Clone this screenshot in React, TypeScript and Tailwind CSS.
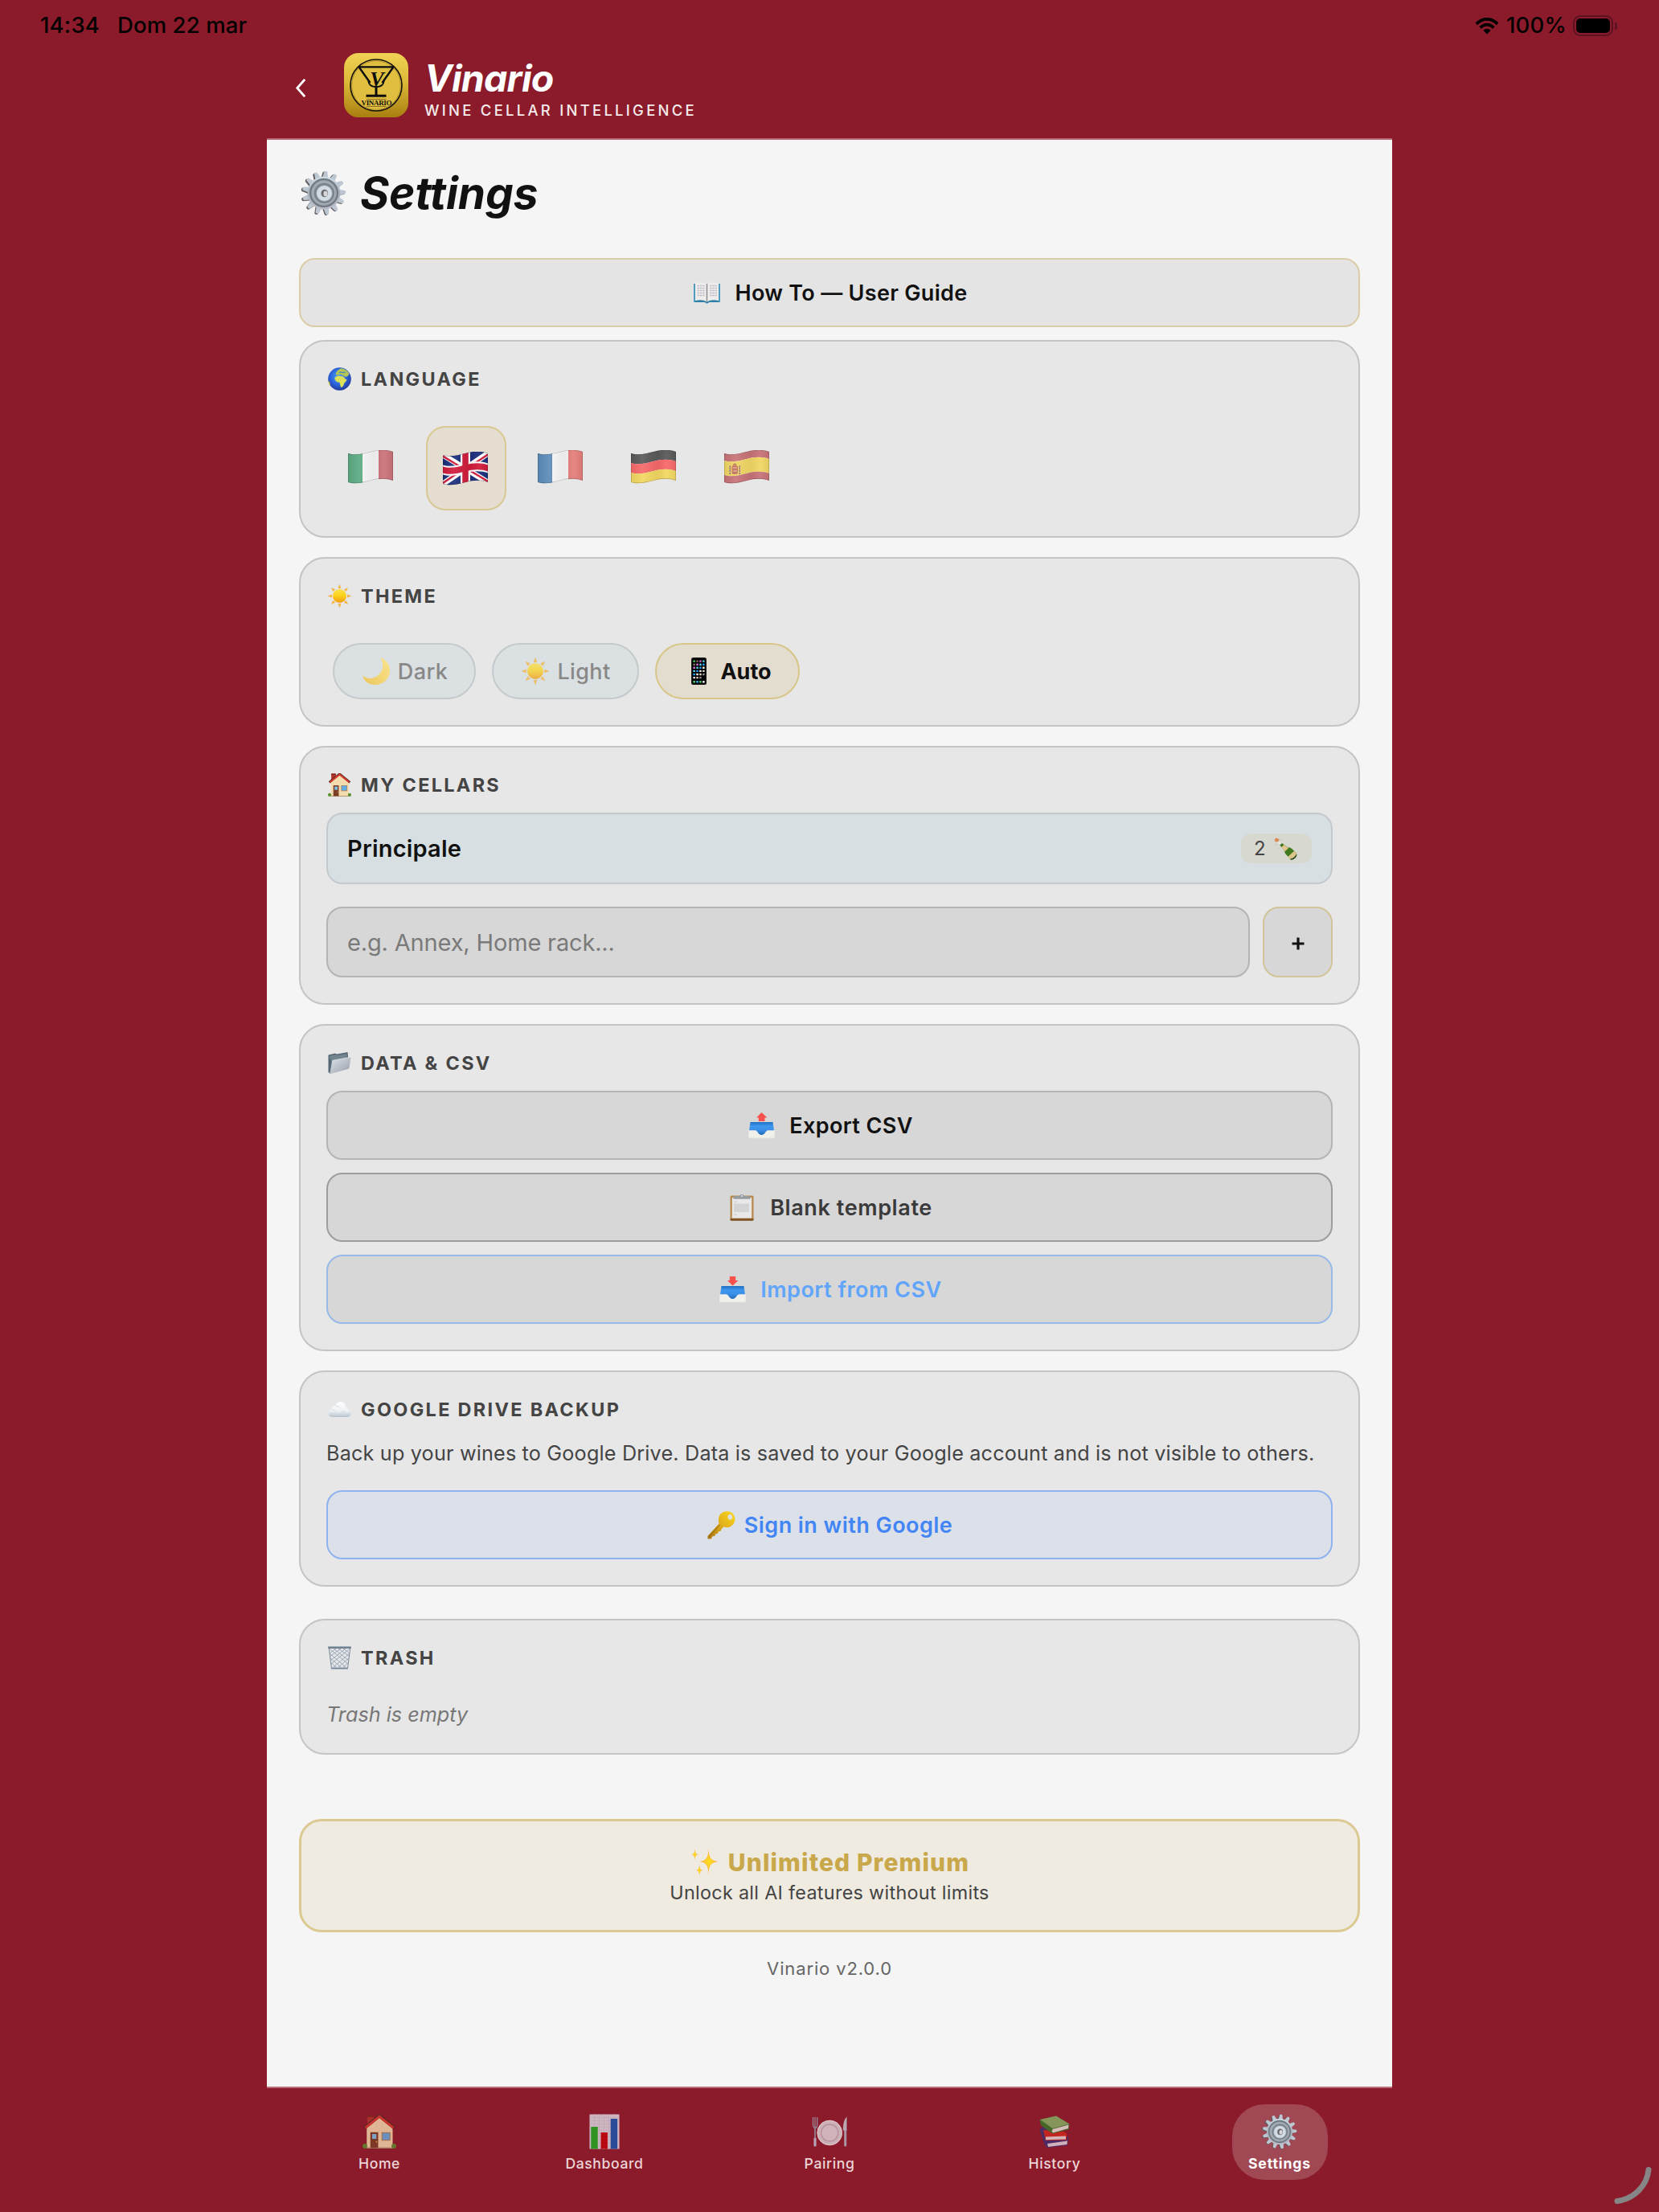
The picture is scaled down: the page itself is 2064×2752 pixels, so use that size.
import { useId, type ReactNode } from 'react'
import { clsx } from 'clsx'

interface IconProps {
  className?: string
}

const gearTeeth = Array.from({ length: 13 }, (_, i) => (i * 360) / 13 + 5)
const sunRays = [0, 45, 90, 135, 180, 225, 270, 315]

function GearIcon({ className }: IconProps) {
  const id = useId()
  return (
    <svg viewBox="0 0 56 56" className={className}>
      <defs>
        <linearGradient id={id} x1="0" y1="0" x2="0" y2="1">
          <stop offset="0" stopColor="#cfdde6" />
          <stop offset="0.5" stopColor="#a9b1b9" />
          <stop offset="1" stopColor="#bcbcca" />
        </linearGradient>
      </defs>
      {gearTeeth.map((angle) => (
        <path
          key={angle}
          d="M24 10 L25.6 1.6 Q28 -0.4 29.8 1.6 L31.4 10 Z"
          fill="#5f5b5c"
          transform={`translate(-1.4 0.8) rotate(${angle} 28 28)`}
        />
      ))}
      {gearTeeth.map((angle) => (
        <path
          key={angle}
          d="M24.4 10 L26 1.4 Q28 0 30 1.4 L31.6 10 Z"
          fill="#bcc7d1"
          transform={`rotate(${angle} 28 28)`}
        />
      ))}
      <circle cx="28" cy="28" r="20.5" fill={`url(#${id})`} />
      <circle cx="28" cy="28" r="17" fill="#959da5" stroke="#6f7880" strokeWidth="2" />
      <circle cx="28" cy="28" r="14" fill="none" stroke="#b4bcc3" strokeWidth="1" />
      <circle cx="28.5" cy="28.5" r="11.5" fill="none" stroke="#79828a" strokeWidth="2" />
      <circle cx="28.5" cy="28.5" r="7" fill="none" stroke="#d3dce5" strokeWidth="5" />
      <ellipse cx="29" cy="28.5" rx="4" ry="4.8" fill="#666a6e" />
      <ellipse cx="30" cy="29" rx="2.6" ry="3.6" fill="#d9d5d6" />
    </svg>
  )
}

function BookIcon({ className }: IconProps) {
  return (
    <svg viewBox="0 0 33 27" className={className}>
      <path d="M0 2 H33 V25 H19 Q16.5 28 14 25 H0 Z" fill="#2f80a8" />
      <path d="M0 2 H2 V25 H0Z M31 2 H33 V25 H31Z" fill="#4f9cc0" />
      <path d="M2 1 Q11 -1 16.5 2 Q22 -1 31 1 V23 Q22 21 16.5 24.5 Q11 21 2 23 Z" fill="#efedec" />
      <path d="M16.5 2 V24" stroke="#8e8e92" strokeWidth="1.5" />
      <path
        d="M4.5 4.5 H13.5 M4.5 7.5 H13.5 M4.5 10.5 H13.5 M4.5 13.5 H13.5 M4.5 16.5 H13.5 M20 4.5 H29 M20 7.5 H29 M20 10.5 H29 M20 13.5 H29 M20 16.5 H29"
        stroke="#bebcc8"
        strokeWidth="1.3"
        strokeDasharray="2.5 0.8"
      />
    </svg>
  )
}

function GlobeIcon({ className }: IconProps) {
  const id = useId()
  return (
    <svg viewBox="0 0 29 29" className={className}>
      <defs>
        <radialGradient id={id} cx="0.45" cy="0.4" r="0.6">
          <stop offset="0" stopColor="#4da3f5" />
          <stop offset="0.6" stopColor="#2b62d9" />
          <stop offset="1" stopColor="#243b9c" />
        </radialGradient>
      </defs>
      <circle cx="14.5" cy="14.5" r="14.3" fill={`url(#${id})`} />
      <path
        d="M8.5 13 C10 10.5 14 9.8 16 11 C19 11 20.5 12 21 14 L23.5 15.5 C22.5 18 20 19 19.8 21 C19 24 17.5 25.5 16 24.5 C15 22.5 15.5 20 14 18.5 C11.5 18.8 8.5 17.5 8.5 13 Z"
        fill="#dfe05a"
      />
      <path
        d="M9.5 8.5 C10.5 5 13 2 17 1.2 C21.5 2 25 5 26.5 8 C25.5 11 23 12.5 21 11.5 C19 9.5 17 10 14.5 8.5 C13 10 11 10 9.5 8.5 Z"
        fill="#b4c455"
      />
      <path d="M0.5 17 C2.5 18 3 22 2.5 23 C1 21 0.3 19 0.5 17 Z" fill="#e0cf4a" />
      <path d="M14 6.5 C16 5.5 19 7 22 6" stroke="#3f86cf" strokeWidth="1.2" fill="none" />
    </svg>
  )
}

function SunIcon({ className }: IconProps) {
  const id = useId()
  return (
    <svg viewBox="0 0 29 29" className={className}>
      <defs>
        <linearGradient id={id} x1="0" y1="0" x2="0" y2="1">
          <stop offset="0" stopColor="#fbe04e" />
          <stop offset="0.45" stopColor="#fbd31c" />
          <stop offset="1" stopColor="#f39c12" />
        </linearGradient>
      </defs>
      {sunRays.map((angle) => (
        <path
          key={angle}
          d="M14.5 0.2 L16.2 4.8 H12.8 Z"
          fill="#f8b62a"
          stroke="#e9a35a"
          strokeWidth="0.3"
          transform={`rotate(${angle} 14.5 14.5)`}
        />
      ))}
      <circle cx="14.5" cy="14.5" r="8.5" fill={`url(#${id})`} />
    </svg>
  )
}

function MoonIcon({ className }: IconProps) {
  const id = useId()
  return (
    <svg viewBox="0 0 34 34" className={className}>
      <defs>
        <linearGradient id={id} x1="1" y1="0" x2="0" y2="1">
          <stop offset="0" stopColor="#fae58f" />
          <stop offset="1" stopColor="#ecc75c" />
        </linearGradient>
      </defs>
      <path
        d="M22 0 C30 3 34 9 34 16 C34 26 26 34 16 34 C8 34 2 30 0 22.5 C6 27 13 27 19 22.5 C26 17 27.5 8 22 0 Z"
        fill={`url(#${id})`}
      />
    </svg>
  )
}

const appDots = ['#4fd36a', '#f2f2f2', '#d56fd6', '#8c8c8c', '#1da3f2', '#8a6d5a', '#e0d6c2', '#5ad1e6']

function PhoneIcon({ className }: IconProps) {
  return (
    <svg viewBox="0 0 19 34" className={className}>
      <rect width="19" height="34" rx="2.5" fill="#1b1b1d" />
      <rect x="1.2" y="1.2" width="16.6" height="31.6" rx="1.5" fill="#000" />
      {Array.from({ length: 23 }, (_, i) => (
        <rect
          key={i}
          x={2.4 + (i % 4) * 3.9}
          y={3.4 + Math.floor(i / 4) * 4.1}
          width="2.5"
          height="2.4"
          rx="0.5"
          fill={appDots[(i * 5 + Math.floor(i / 4)) % 8]}
        />
      ))}
      {['#4fd36a', '#2fb4f6', '#4fd36a', '#fff'].map((fill, i) => (
        <rect key={i} x={2.4 + i * 3.9} y="29" width="2.5" height="2.5" rx="0.5" fill={fill} />
      ))}
    </svg>
  )
}

function HouseIcon({ className }: IconProps) {
  return (
    <svg viewBox="0 0 28 28" className={className}>
      <path d="M4 0.5 H9.5 V8 H4 Z" fill="#b3342d" />
      <path d="M4 0.5 H9.5 V2 H4 Z" fill="#7f2620" />
      <path d="M3.5 10.5 L14 1.5 L25 10.5 V27.5 H3.5 Z" fill="#f4dcae" />
      <path d="M3.5 27 H25 V28 H3.5Z" fill="#b79a78" />
      <path d="M1.6 11 L14 0.8 L26.4 11" fill="none" stroke="#4e2a24" strokeWidth="2.6" />
      <path d="M2.3 10.9 L14 1.5 L25.7 10.9" fill="none" stroke="#d8392f" strokeWidth="2" />
      <rect x="6.5" y="14.5" width="6.5" height="13" fill="#7a3e24" />
      <rect x="8" y="16" width="3.5" height="4" fill="#7cc4ee" />
      <circle cx="11.6" cy="22.5" r="0.6" fill="#e5b54a" />
      <rect x="15.8" y="14.5" width="7.4" height="7" fill="#a98760" />
      <rect x="16.6" y="15.2" width="5.8" height="5.5" fill="#62abe4" />
      <circle cx="2" cy="26" r="2" fill="#5c8f2e" />
      <circle cx="26" cy="26" r="2" fill="#5c8f2e" />
    </svg>
  )
}

function FolderIcon({ className }: IconProps) {
  const id = useId()
  return (
    <svg viewBox="0 0 29 29" className={className}>
      <defs>
        <linearGradient id={id} x1="0" y1="0" x2="1" y2="1">
          <stop offset="0" stopColor="#dfe4ea" />
          <stop offset="1" stopColor="#949da7" />
        </linearGradient>
      </defs>
      <path d="M0.5 4.5 L9 2.5 L11 3.5 L24.5 1 L25.5 10 L3 28 L0.5 26 Z" fill="#566875" />
      <path d="M1.5 6 L9 4 L11 5 L23.5 3 V8 L4 12 Z" fill="#72858f" />
      <path
        d="M5 12.5 Q5.2 11.5 6.5 11.2 L28.6 7 L26.5 20.5 Q26.3 21.5 25 22 L2.2 28.3 Z"
        fill={`url(#${id})`}
      />
      <path d="M5 12.5 Q5.2 11.5 6.5 11.2 L28.6 7" fill="none" stroke="#f0f3f6" strokeWidth="0.6" />
    </svg>
  )
}

function TrayIcon({ down, className }: IconProps & { down?: boolean }) {
  const id = useId()
  return (
    <svg viewBox="0 0 33 33" className={className}>
      <defs>
        <linearGradient id={id} x1="0" y1="0" x2="0" y2="1">
          <stop offset="0" stopColor="#1f6fc2" />
          <stop offset="0.3" stopColor="#3f97ee" />
          <stop offset="0.6" stopColor="#3a8fe6" />
          <stop offset="1" stopColor="#1d62ad" />
        </linearGradient>
      </defs>
      <path d="M2.5 12 H30.5 L32 23 H26 L21 29 H12 L7 23 H1 Z" fill={`url(#${id})`} />
      <path
        d="M0.3 22.3 H8.5 C11.5 22.3 12 28 16.5 28 S21.5 22.3 24.5 22.3 H32.7 V32.7 H0.3 Z"
        fill="#f1f0eb"
      />
      <path d="M0.3 31.8 H32.7 V32.7 H0.3 Z" fill="#d8d6cf" />
      <path
        d={
          down ?
            'M12.8 0 H20.2 V5 H23.5 L16.5 11.5 L10 5 H12.8 Z'
          : 'M16.5 0 L23.5 6.5 H20.5 V11 H12.8 V6.5 H10 Z'
        }
        fill="#f8504a"
      />
    </svg>
  )
}

function ClipboardIcon({ className }: IconProps) {
  return (
    <svg viewBox="0 0 30 33" className={className}>
      <rect x="0.5" y="1.5" width="29" height="31" rx="1.5" fill="#b68a4c" />
      <path d="M0.5 30 H29.5 V31.5 Q29.5 32.7 28 32.7 H2 Q0.5 32.7 0.5 31.5 Z" fill="#80552a" />
      <rect x="2.8" y="4" width="24.4" height="25.5" fill="#e8e8e8" />
      <path d="M5 9 H9 M5 25 H9" stroke="#d4d4d6" strokeWidth="1.4" />
      <path d="M5 11.5 H24 V22 H5 Z" fill="#d4d4d6" />
      <path
        d="M4.5 3.5 Q5 2 7 2 H12 Q12.5 0 15 0 T18 2 H23 Q25 2 25.5 3.5 V5.8 H4.5 Z"
        fill="#999c9f"
      />
      <circle cx="15" cy="2" r="1" fill="#dfe6ea" />
    </svg>
  )
}

function CloudIcon({ className }: IconProps) {
  const id = useId()
  return (
    <svg viewBox="0 0 29 29" className={className}>
      <defs>
        <linearGradient id={id} x1="0" y1="0" x2="0" y2="1">
          <stop offset="0" stopColor="#fdfdfe" />
          <stop offset="0.6" stopColor="#eef1f4" />
          <stop offset="1" stopColor="#b6c1cc" />
        </linearGradient>
      </defs>
      <path
        d="M6 24 C2.5 24 0.5 22 0.5 19 C0.5 16.5 2.3 14.7 4.7 14.5 C4.5 11.5 7 9.5 9.8 10 C10.5 6.8 12.8 5 16 5 C19.5 5 22 7.5 21.8 11.2 C24.5 11.5 25.7 13.2 25.5 15.3 C27.5 15.8 28.7 17.3 28.7 19.3 C28.7 22 26.7 24 24 24 Z"
        fill={`url(#${id})`}
      />
      <path
        d="M5 15 Q8 14.5 9.5 17 M10 10.5 Q13 10 14.5 12.5 M16 18 Q19 15.5 22 17.5"
        stroke="#d3d9df"
        strokeWidth="0.9"
        fill="none"
      />
    </svg>
  )
}

function KeyIcon({ className }: IconProps) {
  const id = useId()
  return (
    <svg viewBox="0 0 35 35" className={className}>
      <defs>
        <linearGradient id={id} x1="1" y1="0" x2="0" y2="1">
          <stop offset="0" stopColor="#fbd91d" />
          <stop offset="0.5" stopColor="#dfae1c" />
          <stop offset="1" stopColor="#a8710f" />
        </linearGradient>
      </defs>
      <path
        fillRule="evenodd"
        d="M16 4 C19 0.5 26 -1.5 31 2.5 C36 7 35 14 31 17.5 C28 20.5 24 21 20.5 19.5 L17.5 22.5 L16.5 25 L13.5 25.5 L13 28 L10 28.5 L9.5 31 L6 31.5 L5 34.5 L0.5 34.5 L0.5 31 L14.5 15.5 C13.5 11 13.5 7.5 16 4 Z M26.2 5 C24.8 6.8 25.5 9.5 27.5 10.5 C29.5 11.3 31.3 9.8 31.2 7.5 C31 4.5 28.2 3 26.2 5 Z"
        fill={`url(#${id})`}
      />
      <path d="M15.5 17 L2 32" stroke="#8f6210" strokeWidth="1" />
    </svg>
  )
}

function BinIcon({ className }: IconProps) {
  return (
    <svg viewBox="0 0 29 29" className={className}>
      <path d="M1.2 2 H27.8 L24.5 28 H4.5 Z" fill="#e3e6ea" />
      <path
        d="M1.5 3 L25 22 M2 9 L22 26 M3 15 L16 26 M4 21 L10 26 M7 3 L26 18 M13 3 L27 13 M19 3 L27 9 M27.500 3 L4 22 M27 9 L7 26 M26 15 L13 26 M25 21 L19 26 M22 3 L3 18 M16 3 L2 13 M10 3 L2 9"
        stroke="#8f9ba8"
        strokeWidth="0.8"
      />
      <path d="M1.2 2 L4.5 28 M27.8 2 L24.5 28" stroke="#7f8c9a" strokeWidth="1" />
      <path d="M0.3 0.5 H28.7 V2.8 H0.3 Z" fill="#5d6a79" />
      <path d="M1 0.5 H28 V1.3 H1 Z" fill="#a3bdd0" />
      <path d="M4.2 26.6 H24.8 V28.5 H4.2 Z" fill="#75879a" />
    </svg>
  )
}

function SparklesIcon({ className }: IconProps) {
  const id = useId()
  return (
    <svg viewBox="0 0 34 34" className={className}>
      <defs>
        <radialGradient id={id}>
          <stop offset="0" stopColor="#fde01f" />
          <stop offset="0.4" stopColor="#fdc92e" />
          <stop offset="1" stopColor="#f6b183" />
        </radialGradient>
      </defs>
      <g fill={`url(#${id})`}>
        <path d="M21.5 0 C22.3 11 23.5 14.5 34 16 C23.5 17.5 22.3 21 21.5 32.5 C20.7 21 19.5 17.5 10 16 C19.5 14.5 20.7 11 21.5 0 Z" />
        <path d="M4.5 0 C5 5 5.5 6.8 9.3 7.3 C5.5 7.8 5 9.5 4.5 14.5 C4 9.5 3.5 7.8 0 7.3 C3.5 6.8 4 5 4.5 0 Z" />
        <path d="M10.2 19.5 C10.7 24.5 11.2 26.2 14.6 26.7 C11.2 27.2 10.7 29 10.2 34 C9.7 29 9.2 27.2 5.7 26.7 C9.2 26.2 9.7 24.5 10.2 19.5 Z" />
      </g>
    </svg>
  )
}

function BottleIcon({ className }: IconProps) {
  return (
    <svg viewBox="0 0 29 28" className={className}>
      <path
        d="M7.2 9.6 L10 7 L15.5 11.3 C17.500 12.500 20 12 22 13.800 L27.5 19 Q29.500 21.500 26.500 25 T20.500 27 L14.500 20.500 C12.800 18.500 13.400 16.500 12.200 15 Z"
        fill="#3f7a1e"
      />
      <path d="M9.5 12 L12.2 9 L15.5 11.5 C16.500 12.200 17.500 12.400 18.500 12.500 L13.500 17.500 C13.300 16.500 13 15.700 12.200 15 Z" fill="#e3c68d" />
      <path d="M17.500 23.700 L25 16.700 L27.500 19 Q28.500 20.500 27.600 22.300 L22.500 27 Q21.500 27.500 20.500 27 Z" fill="#dcc48f" />
      <path d="M27.900 21.500 Q27.800 24 25.500 25.800 T20.500 27 L21.500 26.800 Q26 25.500 27.900 21.500 Z" fill="#25401a" stroke="#25401a" strokeWidth="0.800" />
      <path d="M4 6 L7 4.500 L9 7 L7 9 Z" fill="#e4e6dc" />
      <path d="M0.500 3 L2.500 0.500 L6.500 1.800 L5.500 5 L2 5.500 Z" fill="#d98a55" />
      <path d="M1.500 9.500 L4.500 8 M9 1.500 L8 4 M5.500 13 L6 14" stroke="#c3bfb2" strokeWidth="0.900" />
    </svg>
  )
}

function ChartIcon({ className }: IconProps) {
  return (
    <svg viewBox="0 0 38 44" className={className}>
      <rect x="0.5" y="0.5" width="37" height="43" fill="#ceb6c0" />
      <path
        d="M0.5 4.5 H37.5 M0.5 8.5 H37.5 M0.5 12.5 H37.5 M0.5 16.5 H37.5 M0.5 20.5 H37.5 M0.5 24.5 H37.5 M0.5 28.5 H37.5 M0.5 32.5 H37.5 M0.5 36.5 H37.5 M0.5 40.5 H37.5 M6.5 0 V44 M12.5 0 V44 M18.5 0 V44 M24.5 0 V44 M30.5 0 V44"
        stroke="#bea7b5"
        strokeWidth="0.7"
      />
      <rect x="2.3" y="16" width="8.4" height="27.5" fill="#2f9421" />
      <rect x="14.5" y="23" width="8.4" height="20.5" fill="#b90812" />
      <rect x="26.7" y="6" width="8.4" height="37.5" fill="#2b4c99" />
    </svg>
  )
}

function PlateIcon({ className }: IconProps) {
  return (
    <svg viewBox="0 0 45 39" className={className}>
      <circle cx="22.2" cy="20.5" r="15.7" fill="#ceb1b7" />
      <circle cx="22.2" cy="20.5" r="15.2" fill="none" stroke="#dcc6ca" strokeWidth="1" />
      <circle cx="22.2" cy="20.5" r="10.6" fill="#cfb3b9" stroke="#b7939f" strokeWidth="1.5" />
      <path
        d="M1.5 1 V10 Q1.5 14 4 14.5 T6.7 10 V1 M4 1 V14"
        fill="none"
        stroke="#9a8796"
        strokeWidth="1.3"
      />
      <path d="M4 14 V36" stroke="#8f7f8e" strokeWidth="1.8" strokeLinecap="round" />
      <path d="M4 28 V36" stroke="#b7a3b4" strokeWidth="3.2" strokeLinecap="round" />
      <path d="M43.5 0.5 Q39.5 4 38.8 14 Q38.7 18 40 18 H43.5 Z" fill="#b9a7b2" />
      <path d="M41.7 18 V36" stroke="#ab96a6" strokeWidth="3" strokeLinecap="round" />
    </svg>
  )
}

function BooksIcon({ className }: IconProps) {
  return (
    <svg viewBox="0 0 38 40" className={className}>
      <path d="M0.5 17 L5 14 L36 27 L35 37 L10 40 L7 37 Z" fill="#4b2c66" />
      <path d="M10 35 L35 31.5 L34.5 36 L11 39 Z" fill="#cfb0bb" />
      <path d="M5 18 L30 20 L34 22 V30.5 L8 31 Z" fill="#c3241f" />
      <path d="M8 26.5 L33 25.5 V29.5 L8 30.3 Z" fill="#d3b4b6" />
      <path d="M0.5 5 L21 0.5 L37.5 10.5 L37 17 L17 22.5 L14 21 L2 12 Z" fill="#47672a" />
      <path d="M1 5 L21 0.5 L37.5 10.5 L16.5 16 Z" fill="#86955a" />
      <path d="M17 16.8 L36.5 11.6 L36 16 L17 21.5 Q14.5 19 17 16.8 Z" fill="#d6bbb9" />
    </svg>
  )
}

// One horizontal strip of a waving flag, from y0 to y1 on its left edge
function strip(y0: number, y1: number) {
  return `M0 ${y0} C9 ${y0 + 3} 20 ${y0} 28 ${y0 - 2} C38 ${y0 - 5} 48 ${y0 - 5} 56 ${y0 - 2} V${y1 - 2} C48 ${y1 - 5} 38 ${y1 - 5} 28 ${y1 - 2} C20 ${y1} 9 ${y1 + 3} 0 ${y1} Z`
}

function Flag({ children }: { children: ReactNode }) {
  const id = useId()
  return (
    <svg viewBox="0 0 56 42" className="h-[42px] w-[56px]">
      <defs>
        <clipPath id={id}>
          <path d={strip(4, 40)} />
        </clipPath>
        <linearGradient id={`${id}s`} x1="0" y1="0" x2="1" y2="0">
          <stop offset="0" stopColor="#000" stopOpacity="0.06" />
          <stop offset="0.25" stopColor="#fff" stopOpacity="0.08" />
          <stop offset="0.6" stopColor="#000" stopOpacity="0.05" />
          <stop offset="0.8" stopColor="#fff" stopOpacity="0.06" />
          <stop offset="1" stopColor="#000" stopOpacity="0.06" />
        </linearGradient>
      </defs>
      <g clipPath={`url(#${id})`}>
        {children}
        <path
          d={strip(4, 40)}
          fill={`url(#${id}s)`}
          stroke="#000"
          strokeOpacity="0.25"
          strokeWidth="1.2"
        />
      </g>
    </svg>
  )
}

function Tricolour({ colors }: { colors: [string, string, string] }) {
  return (
    <>
      <rect width="19" height="42" fill={colors[0]} />
      <rect x="18" width="20" height="42" fill={colors[1]} />
      <rect x="38" width="18" height="42" fill={colors[2]} />
    </>
  )
}

const languages = [
  { code: 'it', flag: <Tricolour colors={['#5cab84', '#f6f6f6', '#cd737b']} /> },
  {
    code: 'en',
    flag: (
      <>
        <rect width="56" height="42" fill="#1a2f7c" />
        <path d="M0 4 L56 38 M0 40 L56 2" stroke="#fff" strokeWidth="7" />
        <path
          d="M0 5.5 L28 22.5 M28 20 L56 37 M0 39 L28 20 M28 22 L56 3.5"
          stroke="#d01c3c"
          strokeWidth="2.4"
        />
        <path d="M28 0 V42" stroke="#fff" strokeWidth="12" />
        <path d={strip(16.5, 28.5)} fill="#fff" />
        <path d="M28 0 V42" stroke="#d01c3c" strokeWidth="7.5" />
        <path d={strip(18.6, 26.6)} fill="#d01c3c" />
      </>
    ),
  },
  { code: 'fr', flag: <Tricolour colors={['#5c8cba', '#f6f6f6', '#e57f7b']} /> },
  {
    code: 'de',
    flag: (
      <>
        <path d={strip(2, 16)} fill="#5a5a5a" />
        <path d={strip(16, 28)} fill="#f7696a" />
        <path d={strip(28, 42)} fill="#f2d862" />
      </>
    ),
  },
  {
    code: 'es',
    flag: (
      <>
        <path d={strip(2, 13)} fill="#c87378" />
        <path d={strip(13, 31)} fill="#f1d765" />
        <path d={strip(31, 42)} fill="#c87378" />
        <rect x="9.5" y="19" width="7.5" height="11" rx="2.5" fill="#c4705c" />
        <path d="M10.5 22 H16 M10.5 26 H16" stroke="#e8c9a0" strokeWidth="1" />
        <path
          d="M7.3 19.5 V30 M19.2 19.5 V30"
          stroke="#8d6a82"
          strokeWidth="1.6"
          strokeDasharray="2 0.8"
        />
        <path d="M10.5 18.5 Q13.2 14.5 16 18.5 Z" fill="#a8644f" />
      </>
    ),
  },
]

function Logo() {
  return (
    <svg viewBox="0 0 80 80" className="size-20 shrink-0">
      <defs>
        <linearGradient id="logo-back" x1="0" y1="0" x2="0" y2="1">
          <stop offset="0" stopColor="#f0d254" />
          <stop offset="0.45" stopColor="#dcb938" />
          <stop offset="1" stopColor="#a97f10" />
        </linearGradient>
      </defs>
      <rect width="80" height="80" rx="18" fill="url(#logo-back)" />
      <circle cx="40" cy="40" r="32" fill="#e0bf40" stroke="#15110a" strokeWidth="1.6" />
      <circle cx="40" cy="40" r="30.3" fill="none" stroke="#a98a2c" strokeWidth="0.8" />
      <path d="M18 17.4 H62" stroke="#0d0d0d" strokeWidth="2.4" />
      <path d="M19 18 L32.5 37 M61 18 L47.5 37" fill="none" stroke="#0d0d0d" strokeWidth="2.4" />
      <path d="M30.5 35 Q31 42 40 42 T49.5 35" fill="none" stroke="#0d0d0d" strokeWidth="2" />
      <path d="M40 42 V53" stroke="#0d0d0d" strokeWidth="3" />
      <path d="M27.5 53.2 H52.5" stroke="#0d0d0d" strokeWidth="3" />
      <path d="M28 57.5 H52.5 M28 66.5 H52.5" stroke="#6f5a1c" strokeWidth="0.8" />
      <text
        x="41"
        y="41"
        textAnchor="middle"
        className="font-['Liberation_Serif',serif] text-[26px] font-bold italic"
        fill="#0d0d0d"
      >
        V
      </text>
      <text
        x="40.5"
        y="65"
        textAnchor="middle"
        textLength="38"
        className="font-['Liberation_Serif',serif] text-[9px] font-bold"
        fill="#15110a"
      >
        VINARIO
      </text>
    </svg>
  )
}

function StatusBar() {
  return (
    <div className="flex h-16 items-center pl-[50px] text-[27.5px] leading-none font-medium text-black">
      <span className="w-[96px] tracking-[0.2px]">14:34</span>
      <span className="tracking-[0.1px]">Dom 22 mar</span>
      <svg viewBox="0 0 30 21" className="ml-auto h-[21px] w-[30px]">
        <path d="M1.8 7.8 Q15 -4.2 28.2 7.8" fill="none" stroke="#000" strokeWidth="3.9" />
        <path d="M6.5 12.4 Q15 5 23.5 12.4" fill="none" stroke="#000" strokeWidth="3.7" />
        <path d="M15 20.5 L10.3 15.7 Q15 12 19.7 15.7 Z" fill="#000" />
      </svg>
      <span className="ml-[9px] w-[83px] tracking-[0.2px]">100%</span>
      <div className="flex h-[26px] w-[50px] items-center justify-center rounded-[9px] border-2 border-[#5c1220]">
        <div className="h-[18px] w-[42px] rounded-[5px] bg-black" />
      </div>
      <div className="mr-[52px] ml-[2px] h-[9px] w-[3px] rounded-r-full bg-[#5c1220]" />
    </div>
  )
}

function Header() {
  return (
    <header className="flex h-[110px] items-start border-b-2 border-[#b96b77] pl-[35px]">
      <button aria-label="Back" className="mt-[34px] w-[61px]">
        <svg viewBox="0 0 14 23" className="h-[23px] w-[14px]">
          <path d="M12.2 0.8 L2.8 11.5 L12.2 22.2" fill="none" stroke="#fff" strokeWidth="2.8" />
        </svg>
      </button>
      <div className="mt-[2px] flex">
        <Logo />
        <div className="ml-[20px] text-white">
          <h1 className="mt-[3px] flex h-14 items-center text-[46.5px] leading-none font-bold tracking-[-0.8px] italic">
            Vinario
          </h1>
          <p className="flex h-6 items-center text-[18.4px] leading-none font-medium tracking-[3.3px] text-[#f6ebed]">
            WINE CELLAR INTELLIGENCE
          </p>
        </div>
      </div>
    </header>
  )
}

interface CardProps {
  icon: ReactNode
  title: string
  className?: string
  children: ReactNode
}

function Card({ icon, title, className, children }: CardProps) {
  return (
    <section
      className={clsx('rounded-[32px] border-2 border-[#c4c4c4] bg-[#e7e7e7] p-8', className)}
    >
      <h3 className="flex h-[29px] items-center text-[23.4px] leading-none font-bold tracking-[2.35px] text-[#444]">
        <span className="ml-[2px] flex w-[41px]">{icon}</span>
        {title}
      </h3>
      {children}
    </section>
  )
}

interface WideButtonProps {
  icon: ReactNode
  label: string
  className: string
  tight?: boolean
}

function WideButton({ icon, label, className, tight }: WideButtonProps) {
  return (
    <button
      className={clsx(
        'flex h-[86px] w-full items-center justify-center rounded-[20px] border-2 text-[27px] leading-none font-semibold',
        className,
      )}
    >
      <span className={clsx('flex w-[38px] justify-center', tight ? 'mr-[9px]' : 'mr-4')}>
        {icon}
      </span>
      {label}
    </button>
  )
}

const themes = [
  { label: 'Dark', icon: <MoonIcon className="size-[34px]" />, width: 'w-[178px]' },
  { label: 'Light', icon: <SunIcon className="size-[34px] opacity-75" />, width: 'w-[183px]' },
  { label: 'Auto', icon: <PhoneIcon className="h-[34px] w-[19px]" />, width: 'w-[180px]' },
]

const tabs = [
  { label: 'Home', icon: <HouseIcon className="size-[42px] opacity-80" /> },
  { label: 'Dashboard', icon: <ChartIcon className="h-11 w-[38px]" /> },
  { label: 'Pairing', icon: <PlateIcon className="h-[39px] w-[45px]" /> },
  { label: 'History', icon: <BooksIcon className="h-10 w-[38px]" /> },
  { label: 'Settings', icon: <GearIcon className="size-11" /> },
]

function TabBar({ active }: { active: string }) {
  return (
    <nav className="flex h-[156px] border-t-2 border-[#b96b77] pt-5">
      {tabs.map(({ label, icon }) => (
        <div key={label} className="flex flex-1 justify-center">
          <button
            className={clsx(
              'flex h-[94px] min-w-[119px] flex-col items-center rounded-[40px] pt-3 text-[17.6px] leading-none',
              active === label ?
                'bg-[#a14855] font-bold tracking-[0.9px] text-white'
              : 'font-medium tracking-[0.6px] text-[#ecd5d8]',
            )}
          >
            <span className="flex h-11 items-center">{icon}</span>
            <span className="flex h-[35px] items-center">{label}</span>
          </button>
        </div>
      ))}
    </nav>
  )
}

export default function App() {
  return (
    <div className="relative flex h-[2752px] w-[2064px] flex-col overflow-hidden bg-[#8b1b2a] font-[Inter,sans-serif]">
      <StatusBar />
      <div className="mx-auto flex w-[1400px] flex-1 flex-col">
        <Header />

        <main className="flex-1 bg-[#f5f5f5] px-10 pt-8">
          <h2 className="flex h-[68px] items-center text-[55px] leading-none font-bold text-[#111] italic">
            <GearIcon className="mr-[17px] ml-[3px] size-[56px]" />
            Settings
          </h2>

          <WideButton
            icon={<BookIcon className="h-[27px] w-[33px]" />}
            label="How To — User Guide"
            className="mt-[47px] border-[#d9cda8] bg-[#e4e4e4] tracking-[0.3px] text-[#111]"
          />

          <Card icon={<GlobeIcon className="size-[29px]" />} title="LANGUAGE" className="mt-4">
            <div className="mt-11 ml-2 flex h-[105px] items-start gap-5">
              {languages.map(({ code, flag }) => (
                <button
                  key={code}
                  aria-label={code}
                  className={clsx(
                    'flex items-center justify-center rounded-3xl pr-[2px]',
                    code === 'en' ?
                      'h-[105px] w-[100px] border-2 border-[#d8c893] bg-[#e4ddd0]'
                    : 'h-[101px] w-24',
                  )}
                >
                  <Flag>{flag}</Flag>
                </button>
              ))}
            </div>
          </Card>

          <Card icon={<SunIcon className="size-[29px]" />} title="THEME" className="mt-6">
            <div className="mt-11 ml-2 flex gap-5">
              {themes.map(({ label, icon, width }) => (
                <button
                  key={label}
                  className={clsx(
                    'flex h-[70px] items-center justify-center rounded-full border-2 text-[27px] leading-none',
                    width,
                    label === 'Auto' ?
                      'border-[#d8c588] bg-[#e3ddcf] font-bold text-[#111]'
                    : 'border-[#c4c9cb] bg-[#dbe0e2] font-medium tracking-[0.4px] text-[#888]',
                  )}
                >
                  <span className="mr-2 flex w-[38px] justify-center">{icon}</span>
                  {label}
                </button>
              ))}
            </div>
          </Card>

          <Card icon={<HouseIcon className="size-[29px]" />} title="MY CELLARS" className="mt-6">
            <div className="mt-5 flex h-[89px] items-center rounded-[20px] border-2 border-[#c3c9cd] bg-[#d8dfe2] px-6">
              <span className="text-[29px] leading-none font-semibold tracking-[0.2px] text-[#111]">
                Principale
              </span>
              <span className="ml-auto flex h-[37px] w-[88px] items-center rounded-xl bg-[#d7d8d0] pl-4 text-[24px] leading-none text-[#444]">
                2
                <BottleIcon className="ml-[10px] h-7 w-[29px]" />
              </span>
            </div>
            <div className="mt-7 flex h-[88px] gap-4">
              <input
                placeholder="e.g. Annex, Home rack..."
                className="min-w-0 flex-1 rounded-[20px] border-2 border-[#b4b4b4] bg-[#d7d7d7] px-6 pt-px text-[29px] tracking-[-0.16px] placeholder:text-[#7a7a7a]"
              />
              <button
                aria-label="Add"
                className="flex w-[87px] items-center justify-center rounded-[20px] border-2 border-[#d1c499] bg-[#d7d7d7] pt-[3px]"
              >
                <svg viewBox="0 0 16 16" className="size-4">
                  <path d="M8 0.5 V15.5 M0.5 8 H15.5" stroke="#111" strokeWidth="3.2" />
                </svg>
              </button>
            </div>
          </Card>

          <Card icon={<FolderIcon className="size-[29px]" />} title="DATA & CSV" className="mt-6">
            <div className="mt-5 flex flex-col gap-4">
              <WideButton
                icon={<TrayIcon className="size-[33px]" />}
                label="Export CSV"
                className="border-[#b4b4b4] bg-[#d7d7d7] tracking-[0.4px] text-[#111]"
              />
              <WideButton
                icon={<ClipboardIcon className="h-[33px] w-[30px]" />}
                label="Blank template"
                className="border-[#9d9d9d] bg-[#d7d7d7] tracking-[0.6px] text-[#3a3a3a]"
              />
              <WideButton
                icon={<TrayIcon down className="size-[33px]" />}
                label="Import from CSV"
                className="border-[#97bae8] bg-[#d7d7d7] tracking-[0.5px] text-[#60a5fa]"
              />
            </div>
          </Card>

          <Card
            icon={<CloudIcon className="size-[29px]" />}
            title="GOOGLE DRIVE BACKUP"
            className="mt-6"
          >
            <p className="mt-[21px] flex h-10 items-center text-[25.2px] leading-none tracking-[0.18px] whitespace-nowrap text-[#444]">
              Back up your wines to Google Drive. Data is saved to your Google account and is not
              visible to others.
            </p>
            <WideButton
              tight
              icon={<KeyIcon className="size-[35px]" />}
              label="Sign in with Google"
              className="mt-[25px] border-[#8fb2f0] bg-[#dce0e8] tracking-[0.45px] text-[#4285f4]"
            />
          </Card>

          <Card icon={<BinIcon className="size-[29px]" />} title="TRASH" className="mt-10">
            <p className="mt-[41px] flex h-[31px] items-center text-[25.2px] leading-none text-[#777] italic">
              Trash is empty
            </p>
          </Card>

          <button className="mt-20 flex h-[141px] w-full flex-col items-center rounded-[28px] border-3 border-[#dcc992] bg-[#efebe0] pt-8 leading-none">
            <span className="flex h-[38px] items-center text-[30px] font-extrabold tracking-[1.1px] text-[#c9a84c]">
              <SparklesIcon className="mr-[12px] ml-[2px] size-[34px]" />
              Unlimited Premium
            </span>
            <span className="flex h-[37px] items-center text-[23.3px] tracking-[0.33px] text-[#444]">
              Unlock all AI features without limits
            </span>
          </button>

          <p className="mt-[30px] flex h-[30px] items-center justify-center text-[22px] leading-none tracking-[0.86px] text-[#666]">
            Vinario v2.0.0
          </p>
        </main>

        <TabBar active="Settings" />
      </div>

      {/* Corner drag hint */}
      <svg viewBox="0 0 56 56" className="absolute right-[4px] bottom-[4px] size-14">
        <path
          d="M47 7.5 C45 27 30 43 8 46.5"
          fill="none"
          stroke="#868686"
          strokeWidth="7"
          strokeLinecap="round"
        />
      </svg>
    </div>
  )
}
